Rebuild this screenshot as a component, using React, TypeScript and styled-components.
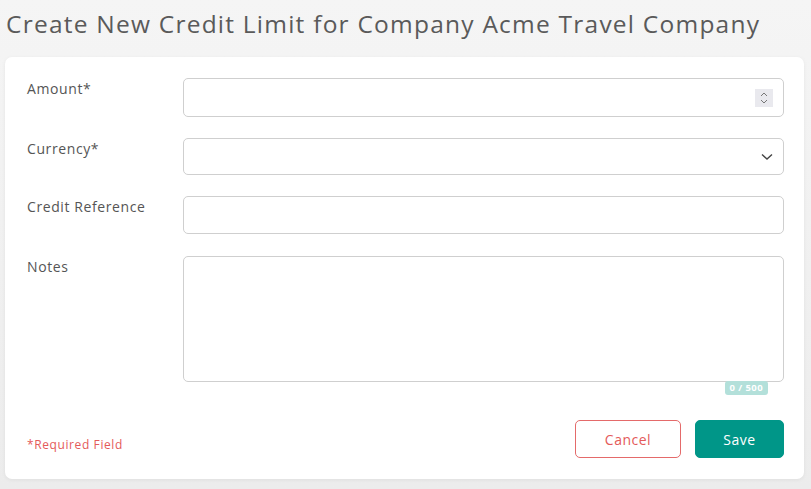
import React from "react";
import styled, { createGlobalStyle } from "styled-components";

const Global = createGlobalStyle`
  html, body { margin: 0; padding: 0; }
  body {
    background: linear-gradient(#f5f5f5, #ececec);
    font-family: "Open Sans", "Liberation Sans", sans-serif;
    color: #555;
    min-height: 489px;
  }
  * { box-sizing: border-box; }
`;

const Page = styled.div`
  padding: 0 7px 10px 5px;
`;

const Title = styled.h1`
  margin: 0;
  padding: 7px 0 0 1px;
  height: 57px;
  font-size: 24.5px;
  font-weight: 400;
  color: #5a5a5a;
  letter-spacing: 1.23px;
  white-space: nowrap;
`;

const Card = styled.div`
  background: #fff;
  border-radius: 7px;
  box-shadow: 0 1px 4px rgba(0, 0, 0, 0.06);
  padding: 21px 20px 21px 22px;
`;

const Row = styled.div<{ $gap?: number }>`
  display: grid;
  grid-template-columns: 156px 1fr;
  margin-bottom: ${(p) => p.$gap ?? 21}px;
`;

const Label = styled.label`
  font-size: 14px;
  color: #555;
  padding-top: 1px;
  letter-spacing: 0.6px;
`;

const FieldWrap = styled.div`
  position: relative;
`;

const Input = styled.div<{ $h: number }>`
  height: ${(p) => p.$h}px;
  border: 1px solid #cfcfcf;
  border-radius: 5px;
  display: flex;
  align-items: center;
  justify-content: flex-end;
  padding-right: 10px;
`;

const Spinner = styled.div`
  width: 18px;
  height: 18px;
  background: #e9e9ee;
  display: flex;
  flex-direction: column;
  align-items: center;
  justify-content: center;
  gap: 2px;
`;

const Textarea = styled.div`
  height: 126px;
  border: 1px solid #cfcfcf;
  border-radius: 5px;
`;

const Counter = styled.span`
  position: absolute;
  right: 16px;
  bottom: -13px;
  background: #b3e0da;
  color: #fff;
  font-size: 9.5px;
  font-weight: 700;
  line-height: 14px;
  padding: 0 5px;
  border-radius: 3px;
  letter-spacing: 0.4px;
`;

const Footer = styled.div`
  display: flex;
  align-items: center;
  justify-content: space-between;
  margin-top: 38px;
`;

const Required = styled.span`
  font-size: 12px;
  color: #e45a5a;
  letter-spacing: 0.6px;
  padding-top: 10px;
`;

const Buttons = styled.div`
  display: flex;
  gap: 14px;
`;

const Button = styled.button<{ $primary?: boolean; $w: number }>`
  width: ${(p) => p.$w}px;
  height: 38px;
  border-radius: 5px;
  font-family: inherit;
  font-size: 14px;
  letter-spacing: 0.5px;
  cursor: pointer;
  border: 1px solid ${(p) => (p.$primary ? "#009688" : "#e46a6a")};
  background: ${(p) => (p.$primary ? "#009688" : "#fff")};
  color: ${(p) => (p.$primary ? "#fff" : "#e45a5a")};
`;

const Chevron = ({ up }: { up?: boolean }) => (
  <svg width="8" height="5" viewBox="0 0 8 5">
    <path
      d={up ? "M1 4 L4 1 L7 4" : "M1 1 L4 4 L7 1"}
      fill="none"
      stroke="#777"
      strokeWidth="1"
    />
  </svg>
);

export default function App() {
  return (
    <Page>
      <Global />
      <Title>Create New Credit Limit for Company Acme Travel Company</Title>
      <Card>
        <Row>
          <Label>Amount*</Label>
          <Input $h={39}>
            <Spinner>
              <Chevron up />
              <Chevron />
            </Spinner>
          </Input>
        </Row>
        <Row>
          <Label>Currency*</Label>
          <Input $h={37}>
            <svg width="12" height="8" viewBox="0 0 12 8">
              <path d="M1 1.5 L6 6 L11 1.5" fill="none" stroke="#444" strokeWidth="1.4" />
            </svg>
          </Input>
        </Row>
        <Row $gap={22}>
          <Label>Credit Reference</Label>
          <Input $h={38} />
        </Row>
        <Row $gap={0}>
          <Label>Notes</Label>
          <FieldWrap>
            <Textarea />
            <Counter>0 / 500</Counter>
          </FieldWrap>
        </Row>
        <Footer>
          <Required>*Required Field</Required>
          <Buttons>
            <Button $w={106}>Cancel</Button>
            <Button $primary $w={89}>Save</Button>
          </Buttons>
        </Footer>
      </Card>
    </Page>
  );
}
